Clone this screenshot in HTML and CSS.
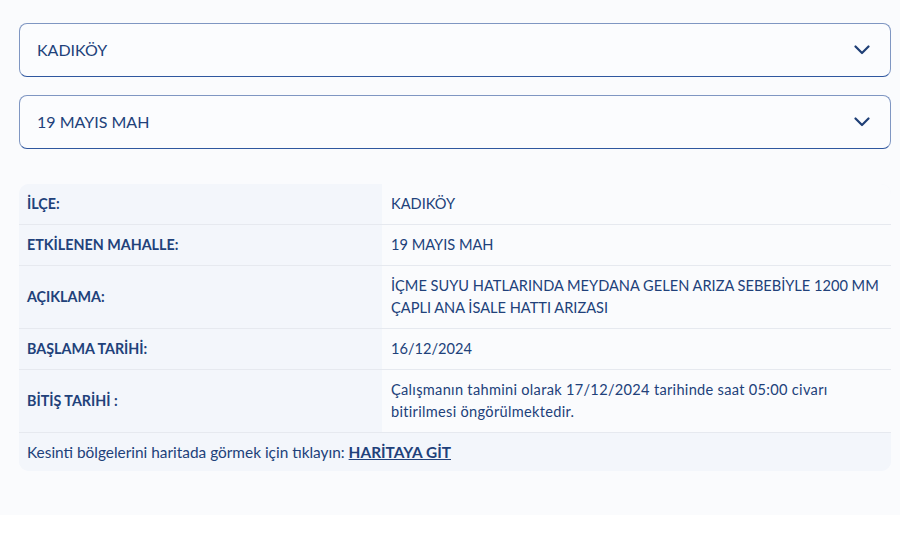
FILE: index.html
```html
<!DOCTYPE html>
<html lang="tr">

<head>
    <meta charset="UTF-8">
    <meta name="viewport" content="width=device-width, initial-scale=1.0">
    <title>Su Kesintileri</title>
    <link rel="stylesheet" href="styles.css">
</head>

<body>
    <div class="page">

        <!-- district / neighbourhood selects -->
        <div class="select">
            <span>KADIKÖY</span>
            <svg class="chevron" width="16" height="10" viewBox="0 0 16 10">
                <polyline points="1.5,1.5 8,8 14.5,1.5" />
            </svg>
        </div>
        <div class="select">
            <span>19 MAYIS MAH</span>
            <svg class="chevron" width="16" height="10" viewBox="0 0 16 10">
                <polyline points="1.5,1.5 8,8 14.5,1.5" />
            </svg>
        </div>

        <!-- outage details -->
        <div class="details">
            <div class="row">
                <div class="label">İLÇE:</div>
                <div class="value">KADIKÖY</div>
            </div>
            <div class="row">
                <div class="label">ETKİLENEN MAHALLE:</div>
                <div class="value">19 MAYIS MAH</div>
            </div>
            <div class="row">
                <div class="label">AÇIKLAMA:</div>
                <div class="value">İÇME SUYU HATLARINDA MEYDANA GELEN ARIZA SEBEBİYLE 1200 MM ÇAPLI ANA İSALE HATTI ARIZASI</div>
            </div>
            <div class="row">
                <div class="label">BAŞLAMA TARİHİ:</div>
                <div class="value">16/12/2024</div>
            </div>
            <div class="row">
                <div class="label">BİTİŞ TARİHİ :</div>
                <div class="value note">Çalışmanın tahmini olarak 17/12/2024 tarihinde saat 05:00 civarı bitirilmesi öngörülmektedir.</div>
            </div>
            <div class="footer">
                Kesinti bölgelerini haritada görmek için tıklayın: <a href="#">HARİTAYA GİT</a>
            </div>
        </div>

    </div>
</body>

</html>
```

FILE: styles.css
```css
* {
    margin: 0;
    padding: 0;
    box-sizing: border-box;
}

body {
    font-family: Lato, "Noto Sans", sans-serif;
    background: #ffffff;
    color: #21417a;
}

.page {
    background: #fafbfd;
    padding: 23px 9px 44px 19px;
}

/* Select boxes */
.select {
    display: flex;
    align-items: center;
    justify-content: space-between;
    height: 54px;
    padding: 0 20px 0 17px;
    border: 1px solid #7f96c2;
    border-bottom-color: #2f579f;
    border-radius: 8px;
    background: #fbfcfe;
    font-size: 16px;
    margin-bottom: 18px;
}

.select span {
    margin-top: -2px;
}

.chevron {
    fill: none;
    stroke: #1f3f76;
    stroke-width: 2.2;
    stroke-linecap: round;
    stroke-linejoin: round;
}

/* Details table */
.details {
    margin-top: 35px;
    border-radius: 10px;
    overflow: hidden;
    background: #f3f6fb;
    font-size: 14.6px;
    line-height: 22px;
}

.row {
    display: flex;
    border-bottom: 1px solid #e6e9ef;
}

.label {
    width: 363px;
    flex-shrink: 0;
    display: flex;
    align-items: center;
    padding: 9px 8px;
    font-size: 14.3px;
    font-weight: bold;
    background: #f3f6fb;
}

.value {
    flex: 1;
    padding: 9px 10px 9px 9px;
    background: #fafbfd;
}

.value.note {
    letter-spacing: 0.3px;
}

.footer {
    padding: 8px 8px 8px;
    font-size: 15.4px;
    background: #f3f6fb;
}

.footer a {
    color: #21417a;
    font-weight: bold;
}
```
